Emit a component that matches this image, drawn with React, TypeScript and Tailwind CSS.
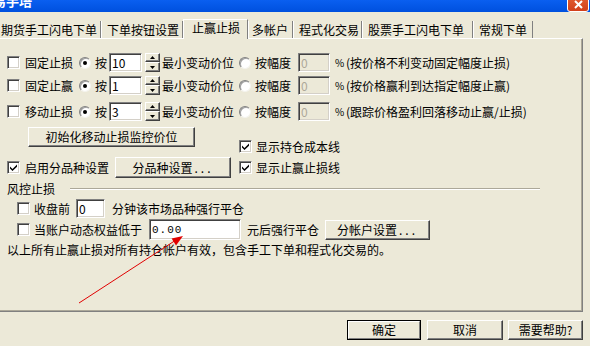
import React from 'react';

const sunken =
  'border border-t-[#808080] border-l-[#808080] border-b-white border-r-white shadow-[inset_1px_1px_0_#404040,inset_-1px_-1px_0_#d4d0c8]';
const raised =
  'border border-t-white border-l-white border-b-[#404040] border-r-[#404040] shadow-[inset_-1px_-1px_0_#808080]';

const CheckBox = ({ checked = false }: { checked?: boolean }) => (
  <span className={`flex h-[13px] w-[13px] shrink-0 items-center justify-center bg-white ${sunken}`}>
    {checked && (
      <svg width="7" height="7" viewBox="0 0 7 7">
        <polygon points="0,2.5 2.5,5 7,0.5 7,2.8 2.5,7 0,4.5" fill="#000" />
      </svg>
    )}
  </span>
);

const Radio = ({ on = false }: { on?: boolean }) => (
  <span className="flex h-[12px] w-[12px] shrink-0 items-center justify-center rounded-full border border-t-[#808080] border-l-[#808080] border-b-[#f4f3ee] border-r-[#f4f3ee] bg-white shadow-[inset_1px_1px_0_#a0a0a0]">
    {on && <span className="h-[4px] w-[4px] rounded-full bg-black" />}
  </span>
);

const Field = ({ value, className, disabled = false }: { value: string; className: string; disabled?: boolean }) => (
  <span
    className={`flex shrink-0 items-center pl-[2px] ${sunken} ${
      disabled ? 'bg-[#ece9d8] text-[#aca899]' : 'bg-white text-black'
    } ${className}`}
  >
    {value}
  </span>
);

const Btn = ({ children, className }: { children: React.ReactNode; className: string }) => (
  <div className={`flex shrink-0 items-center justify-center bg-[#ece9d8] ${raised} ${className}`}>{children}</div>
);

const Spinner = () => (
  <div className="ml-[3px] flex h-[19px] w-[15px] shrink-0 flex-col">
    <div className={`flex h-[9px] items-center justify-center bg-[#ece9d8] ${raised}`}>
      <svg width="5" height="3" viewBox="0 0 5 3">
        <polygon points="2.5,0 5,3 0,3" fill="#000" />
      </svg>
    </div>
    <div className={`flex h-[10px] items-center justify-center bg-[#ece9d8] ${raised}`}>
      <svg width="5" height="3" viewBox="0 0 5 3">
        <polygon points="0,0 5,0 2.5,3" fill="#000" />
      </svg>
    </div>
  </div>
);

interface StopRowProps {
  label: string;
  value: string;
  note: string;
  mt: string;
}

const StopRow = ({ label, value, note, mt }: StopRowProps) => (
  <div className={`flex h-[19px] items-center pl-[7px] ${mt}`}>
    <CheckBox />
    <span className="ml-[5px] w-[48px] shrink-0">{label}</span>
    <span className="ml-[6px]">
      <Radio on />
    </span>
    <span className="ml-[4px] w-[12px] shrink-0">按</span>
    <Field value={value} className="ml-[2px] h-[19px] w-[33px]" />
    <Spinner />
    <span className="ml-[2px] w-[72px] shrink-0">最小变动价位</span>
    <span className="ml-[5px]">
      <Radio />
    </span>
    <span className="ml-[4px] w-[36px] shrink-0">按幅度</span>
    <Field value="0" disabled className="ml-[7px] h-[19px] w-[32px]" />
    <span className="ml-[5px] w-[6px] shrink-0 text-[10px]">%</span>
    <span className="ml-[5px] whitespace-nowrap">{note}</span>
  </div>
);

const tabs = [
  { name: '期货手工闪电下单', cls: '-ml-[4px] w-[105px] pl-[4px]' },
  { name: '下单按钮设置', cls: 'w-[82px] pl-[5px]' },
  { name: '止赢止损', cls: 'w-[65px] pl-[8px]', active: true },
  { name: '多帐户', cls: 'w-[45px] pl-[3px]' },
  { name: '程式化交易', cls: 'w-[69px] pl-[5px]' },
  { name: '股票手工闪电下单', cls: 'w-[111px] pl-[5px]' },
  { name: '常规下单', cls: 'w-[60px] pl-[5px]' },
];

export default function App() {
  return (
    <div className="relative h-[346px] w-[590px] overflow-hidden bg-[#ece9d8] font-['Noto_Sans_CJK_SC','Noto_Sans',sans-serif] text-[12px] leading-[14px] text-black">
      {/* title bar, only its lower edge is on screen */}
      <div className="flex h-[12px] items-end justify-between overflow-hidden bg-gradient-to-b from-[#0a5ff0] to-[#0050de]">
        <span className="-ml-[7px] mb-[5px] whitespace-nowrap text-[13px] font-bold leading-[13px] text-white">易手培</span>
        <div className="mr-[1px] flex h-[22px] w-[22px] shrink-0 items-center justify-center rounded-[3px] border border-white bg-gradient-to-b from-[#e86a3c] to-[#d2401a] pt-[6px]">
          <svg width="9" height="9" viewBox="0 0 9 9">
            <path d="M1 1 L8 8 M8 1 L1 8" stroke="#fff" strokeWidth="2" />
          </svg>
        </div>
      </div>

      {/* tabs */}
      <div className="flex h-[26px] items-end whitespace-nowrap">
        {tabs.map((t) =>
          t.active ? (
            <div
              key={t.name}
              className={`relative z-10 -mb-px h-[20px] shrink-0 border-l border-r border-t border-l-white border-t-white border-r-[#808080] bg-[#ece9d8] pt-[2px] leading-[12px] ${t.cls}`}
            >
              {t.name}
            </div>
          ) : (
            <div
              key={t.name}
              className={`h-[17px] shrink-0 border-l border-r border-l-white border-r-[#808080] pt-[3px] leading-[12px] ${t.cls}`}
            >
              {t.name}
            </div>
          )
        )}
      </div>

      {/* tab page */}
      <div className="flex h-[274px] w-[583px] flex-col border-t border-r border-b border-t-white border-r-[#808080] border-b-[#808080] shadow-[inset_-1px_-1px_0_#aca899]">
        <StopRow label="固定止损" value="10" note="(按价格不利变动固定幅度止损)" mt="mt-[14px]" />
        <StopRow label="固定止赢" value="1" note="(按价格赢利到达指定幅度止赢)" mt="mt-[4px]" />
        <StopRow label="移动止损" value="3" note="(跟踪价格盈利回落移动止赢/止损)" mt="mt-[7px]" />

        <div className="mt-[6px] flex h-[26px] pl-[28px]">
          <Btn className="h-[20px] w-[167px] self-start">初始化移动止损监控价位</Btn>
          <div className="ml-[44px] flex h-[13px] items-center self-end">
            <CheckBox checked />
            <span className="ml-[4px] whitespace-nowrap">显示持仓成本线</span>
          </div>
        </div>

        <div className="mt-[4px] flex h-[21px] items-center pl-[7px]">
          <CheckBox checked />
          <span className="ml-[5px] w-[84px] shrink-0">启用分品种设置</span>
          <Btn className="ml-[6px] h-[21px] w-[116px]">
            分品种设置<span className="ml-[2px] tracking-[3px]">...</span>
          </Btn>
          <span className="ml-[8px]">
            <CheckBox checked />
          </span>
          <span className="ml-[4px] whitespace-nowrap">显示止赢止损线</span>
        </div>

        <div className="mt-[4px] flex h-[14px] items-center pl-[7px]">
          <span className="w-[48px] shrink-0">风控止损</span>
          <span className="ml-[15px] h-[2px] w-[470px] border-t border-b border-t-[#aca899] border-b-white" />
        </div>

        <div className="mt-[3px] flex h-[19px] items-center pl-[17px]">
          <CheckBox />
          <span className="ml-[4px] w-[36px] shrink-0">收盘前</span>
          <Field value="0" className="ml-[6px] h-[19px] w-[29px]" />
          <span className="ml-[7px] whitespace-nowrap">分钟该市场品种强行平仓</span>
        </div>

        <div className="flex h-[23px] items-center pl-[17px]">
          <CheckBox />
          <span className="ml-[4px] w-[108px] shrink-0">当账户动态权益低于</span>
          <Field value="0.00" className="ml-[7px] h-[21px] w-[92px] font-['Liberation_Mono',monospace] text-[11px] tracking-[1px]" />
          <span className="ml-[6px] w-[72px] shrink-0">元后强行平仓</span>
          <Btn className="ml-[6px] h-[20px] w-[105px]">
            分帐户设置<span className="ml-[2px] tracking-[3px]">...</span>
          </Btn>
        </div>

        <div className="mt-[2px] h-[14px] whitespace-nowrap pl-[7px]">
          以上所有止赢止损对所有持仓帐户有效，包含手工下单和程式化交易的。
        </div>
      </div>

      {/* dialog buttons */}
      <div className="mt-[8px] flex pl-[347px]">
        <div className="h-[20px] w-[74px] shrink-0 border border-black">
          <div className="flex h-full w-full items-center justify-center border border-t-white border-l-white border-b-[#808080] border-r-[#808080]">
            确定
          </div>
        </div>
        <Btn className="ml-[6px] h-[20px] w-[76px]">取消</Btn>
        <Btn className="ml-[5px] h-[20px] w-[75px]">需要帮助?</Btn>
      </div>

      {/* red annotation arrow drawn over the dialog */}
      <svg className="pointer-events-none absolute left-0 top-0" width="590" height="346" viewBox="0 0 590 346">
        <line x1="79" y1="303" x2="176" y2="240" stroke="#e00000" strokeWidth="1" />
        <polygon points="183,236 171.6,238.6 176,245.4" fill="#e00000" />
      </svg>
    </div>
  );
}
